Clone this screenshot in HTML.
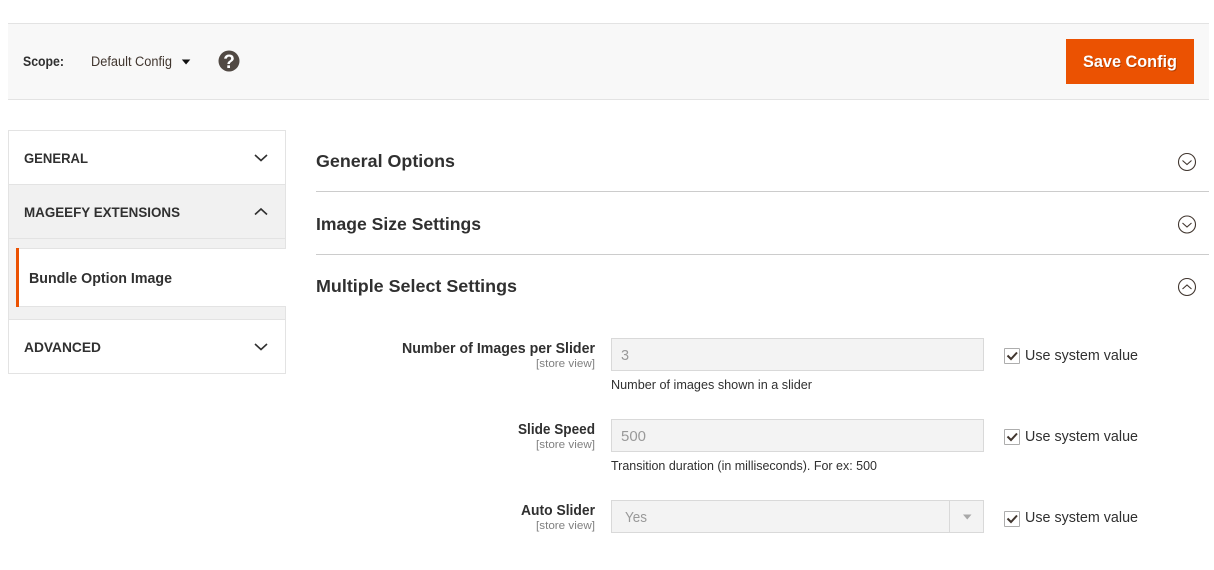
<!DOCTYPE html>
<html lang="en"><head><meta charset="utf-8"><title>Config</title>
<style>
html,body{margin:0;padding:0;background:#fff;width:1214px;height:570px;overflow:hidden}
.b{position:absolute;box-sizing:border-box}
svg{position:absolute;left:0;top:0}
text{font-family:"Liberation Sans",sans-serif;fill:#303030}
.bd{font-weight:bold}
</style></head><body>
<div class="b" style="left:8px;top:23px;width:1201px;height:77px;background:#f8f8f8;border-top:1px solid #e3e3e3;border-bottom:1px solid #e3e3e3"></div>
<div class="b" style="left:1066px;top:39px;width:128px;height:45px;background:#eb5202"></div>

<div class="b" style="left:8px;top:130px;width:278px;height:244px;background:#f1f1f1;border:1px solid #e3e3e3"></div>
<div class="b" style="left:9px;top:131px;width:276px;height:54px;background:#fff;border-bottom:1px solid #e3e3e3"></div>
<div class="b" style="left:9px;top:238px;width:276px;height:1px;background:#e3e3e3"></div>
<div class="b" style="left:16px;top:248px;width:270px;height:59px;background:#fff;border-top:1px solid #e3e3e3;border-bottom:1px solid #e3e3e3"></div>
<div class="b" style="left:16px;top:248px;width:3px;height:59px;background:#eb5202"></div>
<div class="b" style="left:9px;top:319px;width:276px;height:54px;background:#fff;border-top:1px solid #e3e3e3"></div>

<div class="b" style="left:316px;top:191px;width:893px;height:1px;background:#ccc"></div>
<div class="b" style="left:316px;top:254px;width:893px;height:1px;background:#ccc"></div>

<div class="b" style="left:611px;top:338px;width:373px;height:33px;background:#f3f3f3;border:1px solid #d9d9d9"></div>
<div class="b" style="left:611px;top:419px;width:373px;height:33px;background:#f3f3f3;border:1px solid #d9d9d9"></div>
<div class="b" style="left:611px;top:500px;width:373px;height:33px;background:#f3f3f3;border:1px solid #d9d9d9"></div>
<div class="b" style="left:949px;top:500px;width:1px;height:33px;background:#d9d9d9"></div>

<div class="b" style="left:1004px;top:348px;width:16px;height:16px;background:#fff;border:1px solid #adadad;border-radius:1px"></div>
<div class="b" style="left:1004px;top:429px;width:16px;height:16px;background:#fff;border:1px solid #adadad;border-radius:1px"></div>
<div class="b" style="left:1004px;top:511px;width:16px;height:16px;background:#fff;border:1px solid #adadad;border-radius:1px"></div>

<svg width="1214" height="570" viewBox="0 0 1214 570">
<g lengthAdjust="spacingAndGlyphs">
<text class="bd" x="23" y="66" font-size="14" textLength="41" lengthAdjust="spacingAndGlyphs">Scope:</text>
<text x="91" y="66" font-size="13.500" textLength="81" lengthAdjust="spacingAndGlyphs" style="fill:#41362f">Default Config</text>
<path d="M181.800 59.500h8.500l-4.250 5z" fill="#111"/>
<circle cx="229" cy="61" r="10.500" fill="#514943"/>
<text class="bd" x="229" y="68" font-size="19" text-anchor="middle" style="fill:#fff">?</text>
<text class="bd" x="1084" y="68" font-size="17" textLength="94" lengthAdjust="spacingAndGlyphs" style="fill:#a83a00" opacity=".8">Save Config</text>
<text class="bd" x="1083" y="67" font-size="17" textLength="94" lengthAdjust="spacingAndGlyphs" style="fill:#fff">Save Config</text>

<text class="bd" x="24" y="163" font-size="14" textLength="64" lengthAdjust="spacingAndGlyphs">GENERAL</text>
<text class="bd" x="24" y="217" font-size="14" textLength="156" lengthAdjust="spacingAndGlyphs">MAGEEFY EXTENSIONS</text>
<text class="bd" x="29" y="283" font-size="14.500" textLength="143" lengthAdjust="spacingAndGlyphs">Bundle Option Image</text>
<text class="bd" x="24" y="352" font-size="14" textLength="77" lengthAdjust="spacingAndGlyphs">ADVANCED</text>
</g>
<g fill="none" stroke="#303030" stroke-width="1.600">
<path d="M255 155l6 5.500 6-5.500"/>
<path d="M255 214.500l6-5.500 6 5.500"/>
<path d="M255 344l6 5.500 6-5.500"/>
</g>

<text class="bd" x="316" y="167" font-size="17.500" textLength="139" lengthAdjust="spacingAndGlyphs">General Options</text>
<text class="bd" x="316" y="230" font-size="17.500" textLength="165" lengthAdjust="spacingAndGlyphs">Image Size Settings</text>
<text class="bd" x="316" y="292" font-size="17.500" textLength="201" lengthAdjust="spacingAndGlyphs">Multiple Select Settings</text>
<g fill="none" stroke="#41362f" stroke-width="1.100">
<circle cx="1187" cy="162" r="8.500"/><path d="M1182.500 160.500l4.500 4 4.500-4"/>
<circle cx="1187" cy="224.500" r="8.500"/><path d="M1182.500 223l4.500 4 4.500-4"/>
<circle cx="1187" cy="287" r="8.500"/><path d="M1182.500 289l4.500-4 4.500 4"/>
</g>

<text class="bd" x="595" y="353" font-size="14.500" text-anchor="end" textLength="193" lengthAdjust="spacingAndGlyphs">Number of Images per Slider</text>
<text x="595" y="367" font-size="11" text-anchor="end" textLength="59" lengthAdjust="spacingAndGlyphs" style="fill:#808080">[store view]</text>
<text class="bd" x="595" y="434" font-size="14.500" text-anchor="end" textLength="77" lengthAdjust="spacingAndGlyphs">Slide Speed</text>
<text x="595" y="448" font-size="11" text-anchor="end" textLength="59" lengthAdjust="spacingAndGlyphs" style="fill:#808080">[store view]</text>
<text class="bd" x="595" y="515" font-size="14.500" text-anchor="end" textLength="74" lengthAdjust="spacingAndGlyphs">Auto Slider</text>
<text x="595" y="529" font-size="11" text-anchor="end" textLength="59" lengthAdjust="spacingAndGlyphs" style="fill:#808080">[store view]</text>

<text x="621" y="360" font-size="14.500" style="fill:#999">3</text>
<text x="621" y="441" font-size="14.500" textLength="25" lengthAdjust="spacingAndGlyphs" style="fill:#999">500</text>
<text x="625" y="522" font-size="14.500" textLength="22" lengthAdjust="spacingAndGlyphs" style="fill:#999">Yes</text>
<path d="M963 514.500h8.500l-4.250 5z" fill="#a8a8a8"/>

<text x="611" y="389" font-size="12.500" textLength="201" lengthAdjust="spacingAndGlyphs">Number of images shown in a slider</text>
<text x="611" y="470" font-size="12.500" textLength="266" lengthAdjust="spacingAndGlyphs">Transition duration (in milliseconds). For ex: 500</text>

<g fill="none" stroke="#41362f" stroke-width="2">
<path d="M1007.500 355.500l3.500 3.500 6-6.500"/>
<path d="M1007.500 436.500l3.500 3.500 6-6.500"/>
<path d="M1007.500 518.500l3.500 3.500 6-6.500"/>
</g>
<text x="1025" y="360" font-size="14.500" textLength="113" lengthAdjust="spacingAndGlyphs">Use system value</text>
<text x="1025" y="441" font-size="14.500" textLength="113" lengthAdjust="spacingAndGlyphs">Use system value</text>
<text x="1025" y="522" font-size="14.500" textLength="113" lengthAdjust="spacingAndGlyphs">Use system value</text>
</svg>
</body></html>
